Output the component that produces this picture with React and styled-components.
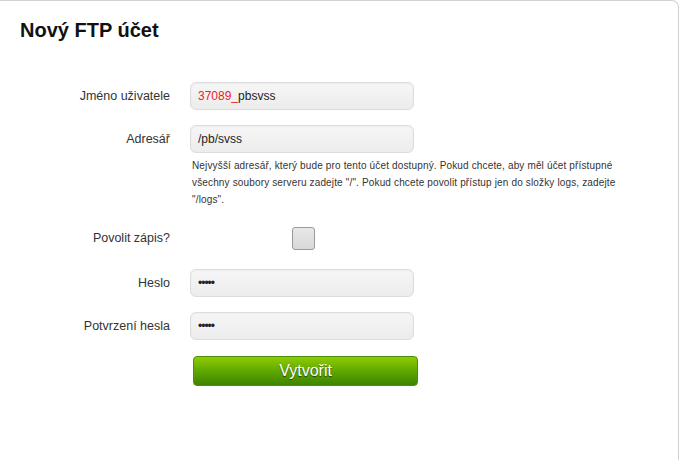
import styled, { createGlobalStyle } from "styled-components";

const GlobalStyle = createGlobalStyle`
    html, body {
        margin: 0;
        padding: 0;
        background: #ffffff;
        font-family: "Liberation Sans", Arial, sans-serif;
        color: #333333;
    }
`;

const Panel = styled.div`
    width: 679px;
    min-height: 470px;
    background-color: #ffffff;
    border-top: 1px solid #d2d2d2;
    border-right: 1px solid #d2d2d2;
    border-top-right-radius: 7px;
    box-sizing: border-box;
`;

const Title = styled.h1`
    margin: 0;
    padding: 17px 0 0 20px;
    font-size: 20px;
    line-height: 24px;
    font-weight: 700;
    color: #111111;
`;

const Form = styled.form`
    display: flex;
    flex-direction: column;
    gap: 15px;
    margin-top: 40px;
`;

const Row = styled.div`
    display: grid;
    grid-template-columns: 170px 1fr;
    column-gap: 20px;
    align-items: start;
`;

const Label = styled.label`
    text-align: right;
    font-size: 12.5px;
    color: #333333;
    line-height: ${(p) => p.$h || 28}px;
`;

const Field = styled.div`
    display: flex;
    flex-direction: column;
`;

const inputLook = `
    box-sizing: border-box;
    width: 224px;
    height: 28px;
    padding: 0 7px;
    border: 1px solid #dcdcdc;
    border-radius: 6px;
    background: linear-gradient(#f6f6f6, #ececec);
    box-shadow: inset 0 1px 2px rgba(0, 0, 0, 0.04);
    font-family: "Liberation Sans", Arial, sans-serif;
    font-size: 12px;
    color: #222222;
    outline: none;
`;

const TextBox = styled.div`
    ${inputLook}
    display: flex;
    align-items: center;
`;

const Prefix = styled.span`
    color: #ee1c2e;
`;

const Input = styled.input`
    ${inputLook}
    letter-spacing: ${(p) => (p.type === "password" ? "-1px" : "0")};
`;

const Hint = styled.p`
    margin: 4px 0 0 2px;
    width: 440px;
    font-size: 10px;
    line-height: 17px;
    letter-spacing: 0.15px;
    color: #333333;
`;

const CheckWrap = styled.div`
    width: 224px;
    height: 31px;
    display: flex;
    align-items: center;
    justify-content: center;
`;

const Check = styled.span`
    display: block;
    box-sizing: border-box;
    width: 23px;
    height: 23px;
    margin-left: 3px;
    border: 1px solid #9a9a9a;
    border-radius: 3px;
    background: linear-gradient(#e8e8e8, #d8d8d8);
`;

const Submit = styled.button`
    box-sizing: border-box;
    width: 225px;
    height: 30px;
    margin: 1px 0 0 3px;
    border: 1px solid #4a8f08;
    border-radius: 4px;
    background: linear-gradient(#8fcb02, #5fa800 50%, #3e8400);
    color: #ffffff;
    font-family: "Liberation Sans", Arial, sans-serif;
    font-size: 16px;
    text-shadow: 0 1px 1px rgba(0, 0, 0, 0.6);
    cursor: pointer;
`;

export default function App() {
    return (
        <>
            <GlobalStyle />
            <Panel>
                <Title>Nový FTP účet</Title>
                <Form onSubmit={(e) => e.preventDefault()}>
                    <Row>
                        <Label>Jméno uživatele</Label>
                        <Field>
                            <TextBox>
                                <Prefix>37089_</Prefix>pbsvss
                            </TextBox>
                        </Field>
                    </Row>
                    <Row>
                        <Label>Adresář</Label>
                        <Field>
                            <Input type="text" defaultValue="/pb/svss" />
                            <Hint>
                                Nejvyšší adresář, který bude pro tento účet dostupný. Pokud chcete, aby měl účet přístupné
                                všechny soubory serveru zadejte "/". Pokud chcete povolit přístup jen do složky logs, zadejte
                                "/logs".
                            </Hint>
                        </Field>
                    </Row>
                    <Row>
                        <Label $h={31}>Povolit zápis?</Label>
                        <CheckWrap>
                            <Check />
                        </CheckWrap>
                    </Row>
                    <Row>
                        <Label>Heslo</Label>
                        <Field>
                            <Input type="password" defaultValue="heslo" />
                        </Field>
                    </Row>
                    <Row>
                        <Label>Potvrzení hesla</Label>
                        <Field>
                            <Input type="password" defaultValue="heslo" />
                        </Field>
                    </Row>
                    <Row>
                        <span />
                        <Submit type="submit">Vytvořit</Submit>
                    </Row>
                </Form>
            </Panel>
        </>
    );
}
